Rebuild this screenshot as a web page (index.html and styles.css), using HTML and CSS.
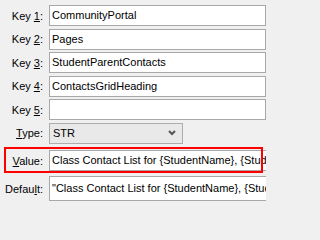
FILE: index.html
```html
<!DOCTYPE html>
<html>
<head>
<meta charset="utf-8">
<link rel="stylesheet" href="styles.css">
</head>
<body>
<div class="form">
  <div class="row"><span class="lbl">Key <u>1</u>:</span><div class="field key">CommunityPortal</div></div>
  <div class="row"><span class="lbl">Key <u>2</u>:</span><div class="field key">Pages</div></div>
  <div class="row"><span class="lbl">Key <u>3</u>:</span><div class="field key">StudentParentContacts</div></div>
  <div class="row"><span class="lbl">Key <u>4</u>:</span><div class="field key">ContactsGridHeading</div></div>
  <div class="row"><span class="lbl">Key <u>5</u>:</span><div class="field key"></div></div>
  <div class="row"><span class="lbl"><u>T</u>ype:</span><div class="select"><span>STR</span><svg class="chev" width="8" height="6" viewBox="0 0 8 6"><polyline points="1,1 4,4 7,1" fill="none" stroke="#555" stroke-width="2"/></svg></div></div>
  <div class="row value"><span class="lbl"><u>V</u>alue:</span><div class="field wide">Class Contact List for {StudentName}, {StudentGrade}</div></div>
  <div class="row default"><span class="lbl">Defau<u>l</u>t:</span><div class="field wide tall">"Class Contact List for {StudentName}, {StudentGrade}"</div></div>
  <div class="highlight"></div>
</div>
</body>
</html>
```

FILE: styles.css
```css
html, body {
  margin: 0;
  padding: 0;
  background: #f0f0f0;
}
body {
  width: 266px;
  height: 202px;
  overflow: hidden;
  font-family: "Liberation Sans", Arial, sans-serif;
  font-size: 11px;
  color: #000;
}
.form {
  position: relative;
  display: flex;
  flex-direction: column;
  gap: 2.5px;
  padding-top: 5px;
}
.row {
  display: flex;
  align-items: center;
  height: 21px;
}
.lbl {
  width: 43px;
  text-align: right;
  margin-right: 6px;
  white-space: nowrap;
  flex: none;
}
.lbl u {
  text-underline-offset: 1px;
}
.field {
  box-sizing: border-box;
  height: 21px;
  border: 1px solid #a8a8a8;
  background: #fff;
  line-height: 19px;
  padding-left: 2px;
  white-space: nowrap;
  overflow: hidden;
  flex: none;
}
.key {
  width: 217px;
}
.wide {
  width: 260px;
}
.select {
  box-sizing: border-box;
  width: 134px;
  height: 21px;
  border: 1px solid #adadad;
  background: #e9e9e9;
  display: flex;
  align-items: center;
  justify-content: space-between;
  padding: 0 6px 0 3px;
  flex: none;
}
.chev {
  display: block;
}
.row.value {
  margin-top: 4px;
}
.row.default {
  margin-top: 2.5px;
  height: 25px;
}
.tall {
  height: 25px;
  line-height: 23px;
}
.highlight {
  position: absolute;
  left: 4px;
  top: 147px;
  width: 259px;
  height: 26px;
  box-sizing: border-box;
  border: 2px solid #f00;
}
```
